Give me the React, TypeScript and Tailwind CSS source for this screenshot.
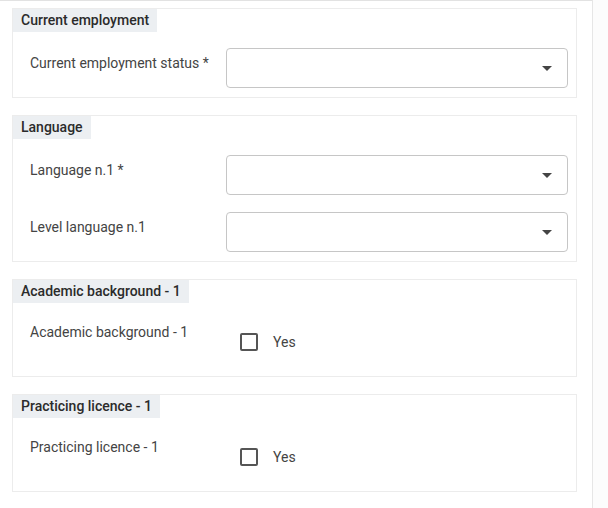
import React from "react";

type RowProps = { label: string };

function SelectRow({ label }: RowProps) {
  return (
    <div className="flex items-start">
      <div className="w-[213px] shrink-0 pl-[17px] pt-[5px] text-[14px] leading-[20px] text-[#444]">
        {label}
      </div>
      <div className="relative h-[40px] w-[342px] rounded-[4px] border border-[#c6c6c6] bg-white">
        <span className="absolute right-[15px] top-[17px] h-0 w-0 border-x-[5px] border-t-[5px] border-x-transparent border-t-[#444]" />
      </div>
    </div>
  );
}

function CheckRow({ label }: RowProps) {
  return (
    <div className="flex items-start">
      <div className="w-[213px] shrink-0 pl-[17px] text-[14px] leading-[20px] text-[#444]">
        {label}
      </div>
      <div className="ml-[14px] mt-[10px] flex items-center">
        <span className="h-[18px] w-[18px] rounded-[2px] border-2 border-[#555]" />
        <span className="ml-[15px] text-[14px] leading-[20px] text-[#444]">Yes</span>
      </div>
    </div>
  );
}

function Card({ title, children, className }: { title: string; children: React.ReactNode; className: string }) {
  return (
    <section className="border border-[#ececec] bg-white">
      <div className="flex">
        <h2 className="h-[23px] bg-[#eceff2] px-[8px] text-[14px] font-medium leading-[23px] text-[#2b2b2b]">
          {title}
        </h2>
      </div>
      <div className={className}>{children}</div>
    </section>
  );
}

export default function App() {
  return (
    <div className="flex h-[508px] w-[608px] bg-white font-['Roboto',sans-serif]">
      <div className="flex w-[592px] flex-col gap-[17px] border-t border-[#e2e2e2] pl-[12px] pr-[15px] pt-[7px]">
        <Card title="Current employment" className="pb-[9px] pt-[16px]">
          <SelectRow label="Current employment status *" />
        </Card>
        <Card title="Language" className="flex flex-col gap-[17px] pb-[9px] pt-[16px]">
          <SelectRow label="Language n.1 *" />
          <SelectRow label="Level language n.1" />
        </Card>
        <Card title="Academic background - 1" className="pb-[24px] pt-[19px]">
          <CheckRow label="Academic background - 1" />
        </Card>
        <Card title="Practicing licence - 1" className="pb-[24px] pt-[19px]">
          <CheckRow label="Practicing licence - 1" />
        </Card>
      </div>
      <div className="w-[16px] border-l border-[#e6e6e6] bg-[#fcfcfc]" />
    </div>
  );
}
